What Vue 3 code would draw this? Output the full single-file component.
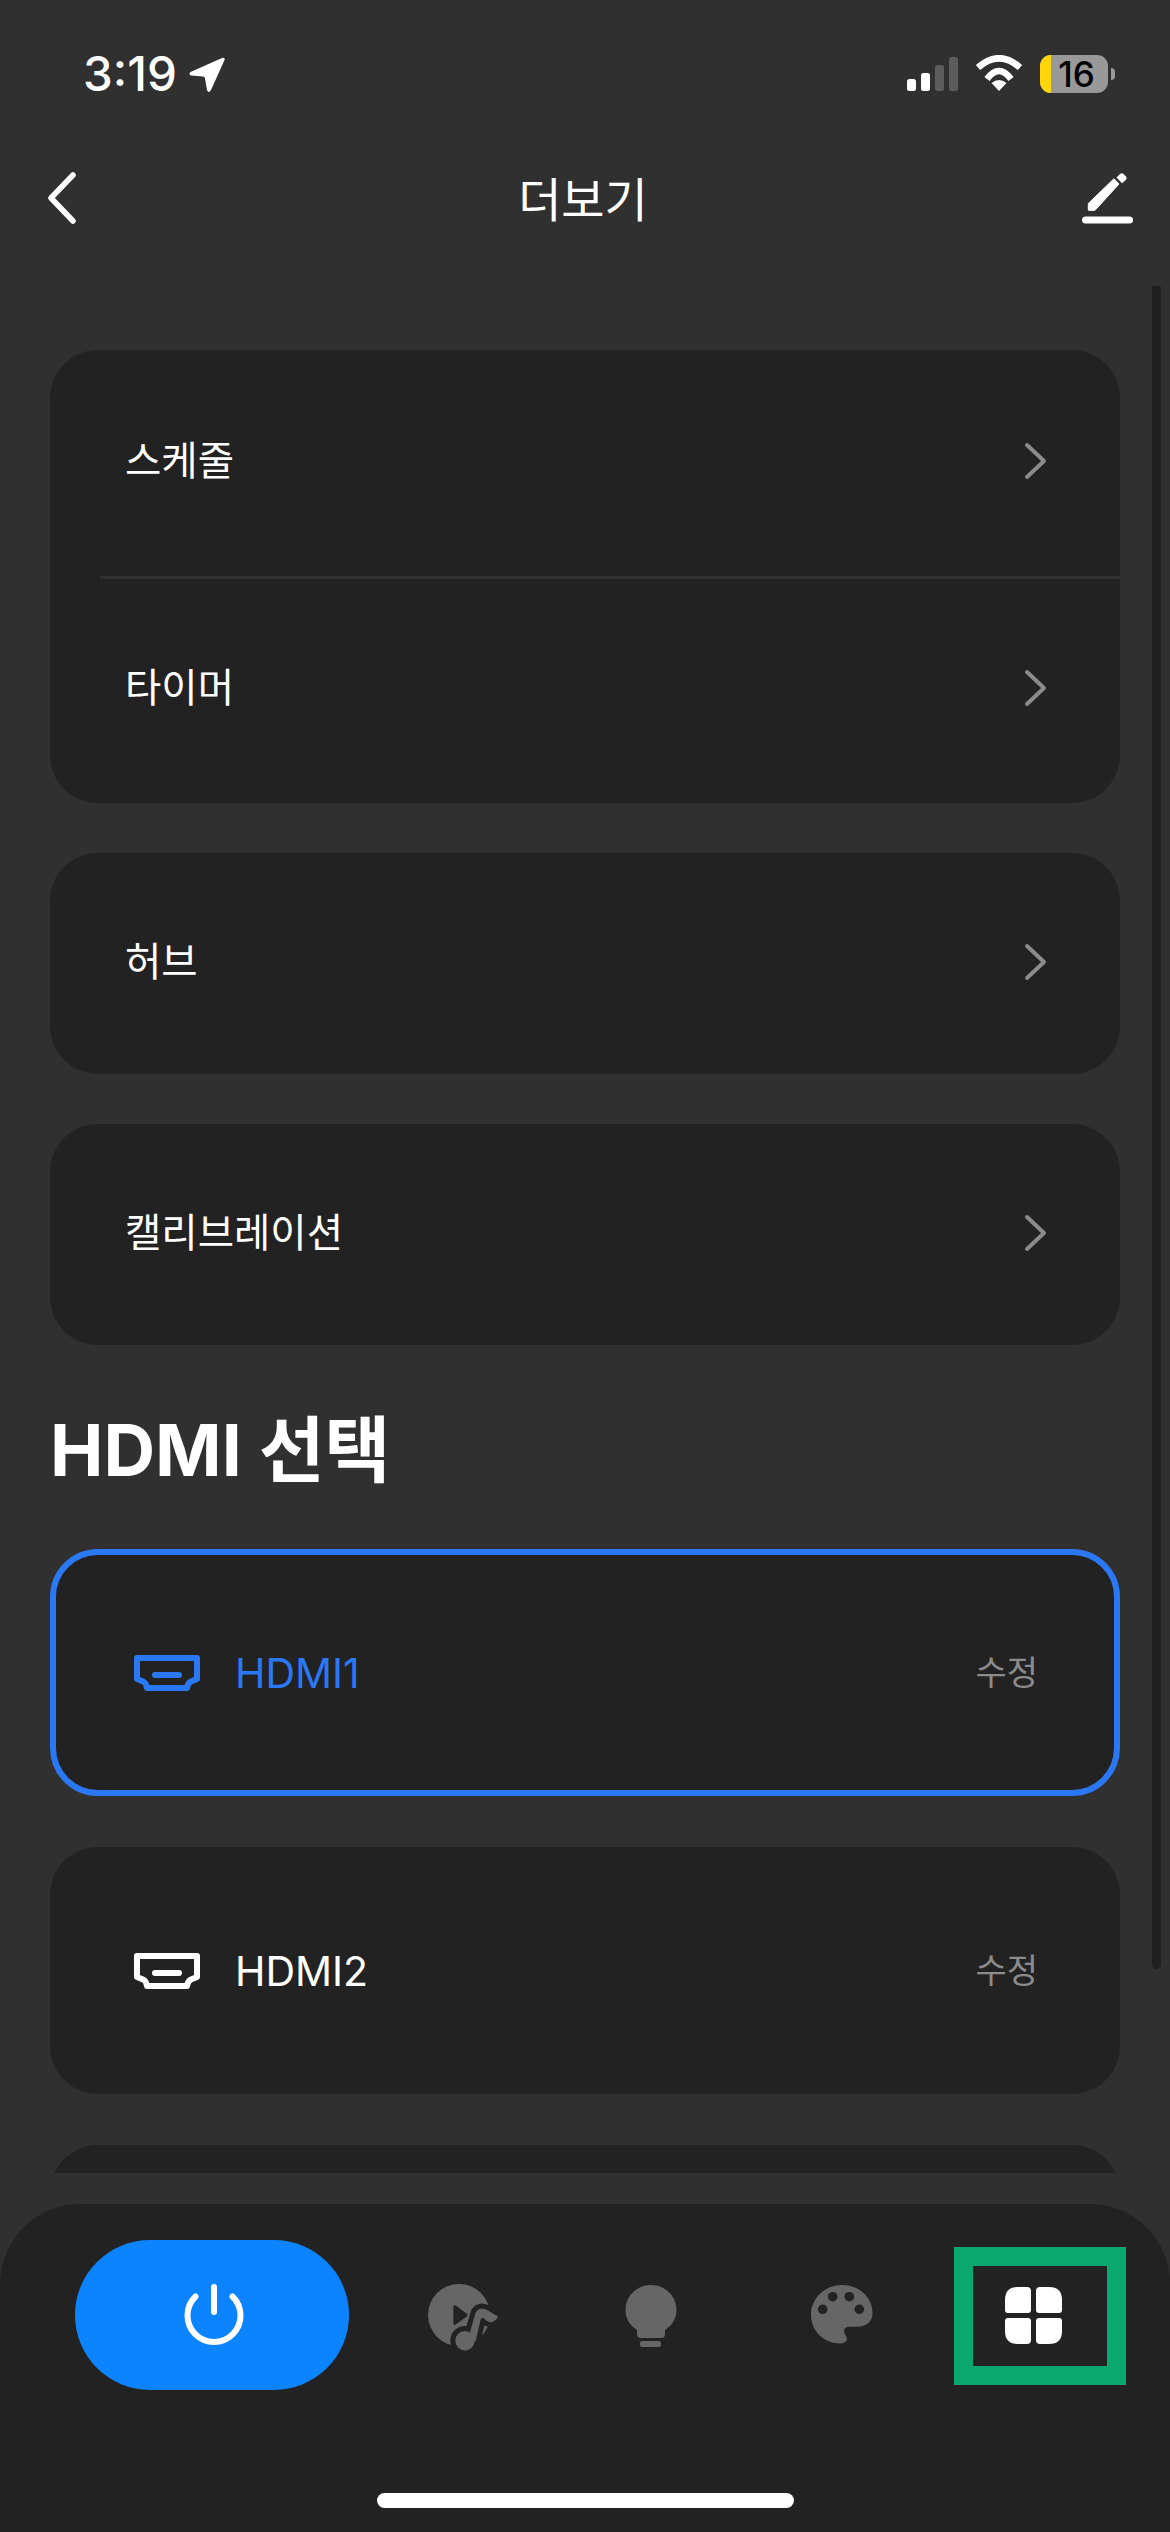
<script setup>
const groups = [['스케줄', '타이머'], ['허브'], ['캘리브레이션']]
const inputs = [
  { name: 'HDMI1', active: true },
  { name: 'HDMI2', active: false }
]
</script>

<template>
  <div class="screen">
    <div class="status">
      <span class="time">3:19</span>
      <svg class="loc" width="36" height="36" viewBox="0 0 36 36"><path d="M33 1Q36.500 0 35.300 3.500L22 33Q19.500 37 18 33L16 21.500Q16 19.500 14 19.500L2 18.500Q-1 17 1.500 15Z" fill="#fff"/></svg>
      <span class="spring"></span>
      <svg class="signal" width="51" height="34" viewBox="0 0 51 34">
        <rect x="0" y="22" width="9" height="12" rx="2.500" fill="#fff"/>
        <rect x="14" y="16" width="9" height="18" rx="2.500" fill="#fff"/>
        <rect x="28" y="8" width="9" height="26" rx="2.500" fill="#5c5c5c"/>
        <rect x="42" y="0" width="9" height="34" rx="2.500" fill="#5c5c5c"/>
      </svg>
      <svg class="wifi" width="48" height="36" viewBox="0 0 48 36">
        <path d="M3 12.500Q24 -6 45 12.500" fill="none" stroke="#fff" stroke-width="6.500"/>
        <path d="M12 24Q24 8 36 24" fill="none" stroke="#fff" stroke-width="6.500"/>
        <path d="M24 36 16.500 28Q24 22 31.500 28Z" fill="#fff"/>
      </svg>
      <div class="battery"><i class="charge"></i><span>16</span></div>
      <i class="cap"></i>
    </div>

    <header class="bar">
      <svg width="30" height="52" viewBox="0 0 30 52"><path d="M26 3 4 26l22 23" fill="none" stroke="#fff" stroke-width="5.500" stroke-linecap="round" stroke-linejoin="round"/></svg>
      <h1>더보기</h1>
      <svg width="52" height="52" viewBox="0 0 52 52">
        <path d="M6.300 38V31.500L32 6.700 37 12 13 38.300H7Q6.300 38.300 6.300 38Z" fill="#fff" stroke="#fff" stroke-width="1" stroke-linejoin="round"/>
        <path d="M34.500 5.500 38 2Q39.700 .5 41.500 2L44 4.500Q45.500 6 44 7.700L40 11.300Z" fill="#fff"/>
        <rect x="0" y="44.500" width="51" height="7" rx="3.500" fill="#fff"/>
      </svg>
    </header>

    <main class="scroll">
      <section v-for="(g, i) in groups" :key="i" class="card">
        <div v-for="item in g" :key="item" class="row" :class="{ tall: g.length > 1 }">
          <span class="label">{{ item }}</span>
          <svg width="24" height="38" viewBox="0 0 24 38"><path d="M3 3l17 16L3 35" fill="none" stroke="#8b8b8b" stroke-width="4" stroke-linecap="round" stroke-linejoin="round"/></svg>
        </div>
      </section>
      <h2>HDMI 선택</h2>
      <div v-for="inp in inputs" :key="inp.name" class="input" :class="{ on: inp.active }">
        <svg width="66" height="36" viewBox="0 0 66 36">
          <path d="M3 3h60v21l-6 2.500c-2.500 1-3.500 3-4 6.500H13c-.5-3.500-1.500-5.500-4-6.500L3 24Z" fill="none" stroke="currentColor" stroke-width="6" stroke-linejoin="round"/>
          <rect x="18" y="17" width="30" height="6" rx="3" fill="currentColor"/>
        </svg>
        <span class="iname">{{ inp.name }}</span>
        <span class="edit">수정</span>
      </div>
      <div class="input"></div>
      <i class="thumb"></i>
    </main>

    <nav class="tabs">
      <div class="tabrow">
        <button class="power">
          <svg width="60" height="62" viewBox="0 0 60 62">
            <path d="M11.500 12.500a26.500 26.500 0 1 0 37 0" fill="none" stroke="#fff" stroke-width="6" stroke-linecap="round"/>
            <path d="M30 3v25" stroke="#fff" stroke-width="6" stroke-linecap="round"/>
          </svg>
        </button>
        <svg class="t1" width="72" height="68" viewBox="0 0 72 68">
          <circle cx="31" cy="31" r="31" fill="#666"/>
          <path d="M25.300 23c0-1.500 1.300-2.200 2.500-1.400l11 8.200c1 .8 1 2 0 2.800l-11 8c-1.200.8-2.500.1-2.500-1.400Z" fill="#222"/>
          <g fill="#222" stroke="#222" stroke-width="10" stroke-linejoin="round">
            <circle cx="37" cy="56.700" r="9.700"/>
            <path d="M47.500 58 52.500 36Q53 33.500 55.500 34Q58 37 62 38.300Q67 38 70.300 32.700L60 26.500Q55 23.500 51.500 25Q47.500 27 47 31L42 48Z"/>
          </g>
          <g fill="#666">
            <circle cx="37" cy="56.700" r="9.700"/>
            <path d="M47.500 58 52.500 36Q53 33.500 55.500 34Q58 37 62 38.300Q67 38 70.300 32.700L60 26.500Q55 23.500 51.500 25Q47.500 27 47 31L42 48Z"/>
          </g>
        </svg>
        <svg class="t2" width="52" height="62" viewBox="0 0 52 62">
          <path d="M26 0C11.600 0 .5 11 .5 25c0 8.500 4 15 11.500 20v4c0 3 1.500 4 4 4h20c2.500 0 4-1 4-4v-4c7.500-5 11.500-11.500 11.500-20C51.500 11 40.400 0 26 0Z" fill="#666"/>
          <rect x="15" y="56" width="21" height="6" rx="2" fill="#666"/>
        </svg>
        <svg class="t3" width="62" height="60" viewBox="0 0 62 60">
          <path d="M31 0C14 0 0 13 0 30C0 46 13 58.500 29 58.500C35 58.500 37.500 54.500 35 51C32 47 32 41.700 39 41.700H46C55 41.700 61.500 37 61.500 28C61.500 12 48 0 31 0Z" fill="#666"/>
          <circle cx="21.700" cy="11.700" r="4.800" fill="#222"/>
          <circle cx="38.300" cy="11.700" r="4.800" fill="#222"/>
          <circle cx="11.700" cy="24.300" r="4.800" fill="#222"/>
          <circle cx="48.300" cy="24.300" r="4.800" fill="#222"/>
        </svg>
        <div class="tmore">
          <svg width="57" height="57" viewBox="0 0 57 57">
            <path d="M13 0h9q4 0 4 4v19q0 3-3 3H3q-3 0-3-3V13Q0 0 13 0Z" fill="#fff"/>
            <path d="M44 0h-9q-4 0-4 4v19q0 3 3 3h20q3 0 3-3V13Q57 0 44 0Z" fill="#fff"/>
            <path d="M13 57h9q4 0 4-4V34q0-3-3-3H3q-3 0-3 3v10Q0 57 13 57Z" fill="#fff"/>
            <path d="M44 57h-9q-4 0-4-4V34q0-3 3-3h20q3 0 3 3v10Q57 57 44 57Z" fill="#fff"/>
          </svg>
        </div>
      </div>
      <i class="home"></i>
    </nav>
  </div>
</template>

<style>
html, body { margin: 0; background: #303030; }
</style>

<style scoped>
.screen {
  width: 1170px;
  height: 2532px;
  background: #303030;
  color: #fff;
  display: flex;
  flex-direction: column;
  overflow: hidden;
  font-family: Inter, "Noto Sans CJK KR", sans-serif;
}
.status {
  height: 110px;
  box-sizing: border-box;
  padding: 55px 55px 0 83px;
  display: flex;
  align-items: flex-start;
}
.time { font-size: 47.500px; line-height: 38px; font-weight: 500; }
.loc { margin: 2px 0 0 12px; }
.spring { flex: 1; }
.signal { margin-top: 2px; }
.wifi { margin: 0 0 0 17px; }
.battery {
  position: relative;
  width: 68px;
  height: 38px;
  margin-left: 17px;
  border-radius: 11px;
  background: #999;
  display: flex;
  align-items: center;
  justify-content: center;
  color: #000;
  font-size: 35px;
  line-height: 38px;
  font-weight: 500;
}
.battery span { position: relative; margin-left: 5px; }
.charge { position: absolute; left: 0; top: 0; bottom: 0; width: 11px; border-radius: 11px 0 0 11px; background: #ffd60a; }
.cap { width: 4px; height: 12px; margin: 13px 0 0 3px; border-radius: 0 6px 6px 0; background: #999; }
.bar {
  height: 176px;
  box-sizing: border-box;
  padding: 0 36px 0 47px;
  display: flex;
  align-items: center;
  justify-content: space-between;
}
.bar h1 { margin: 4px 0 0 7px; font-size: 47px; font-weight: 400; line-height: 60px; }
.scroll {
  position: relative;
  height: 1887px;
  overflow: hidden;
  box-sizing: border-box;
  padding: 64px 50px 0;
}
.card {
  background: #222;
  border-radius: 48px;
  margin-bottom: 50px;
}
.row {
  height: 221px;
  box-sizing: border-box;
  padding: 0 72px 4px 75px;
  display: flex;
  align-items: center;
  justify-content: space-between;
  font-size: 39.500px;
}
.label { margin-bottom: 7px; }
.row.tall { height: 226px; }
.row.tall + .row.tall { position: relative; height: 227px; }
.row.tall + .row.tall::before {
  content: "";
  position: absolute;
  left: 50px;
  right: 0;
  top: 0;
  height: 3px;
  background: #303030;
}
h2 {
  margin: -12px 0 0;
  height: 166px;
  box-sizing: border-box;
  padding-top: 27px;
  font-size: 71.500px;
  line-height: 80px;
  font-weight: 700;
}
.input {
  height: 247px;
  box-sizing: border-box;
  margin-bottom: 51px;
  padding: 0 82px 0 84px;
  border-radius: 48px;
  background: #222;
  display: flex;
  align-items: center;
  font-size: 41px;
}
.input.on {
  border: 6px solid #2b78f5;
  padding: 0 76px 0 78px;
  color: #2b78f5;
}
.iname { margin-left: 35px; flex: 1; line-height: 48px; }
.edit { color: #8b8b8b; font-size: 34px; margin-bottom: 4px; }
.thumb {
  position: absolute;
  right: 9px;
  top: -2px;
  width: 9px;
  height: 1685px;
  border-radius: 5px;
  background: #1f1f1f;
}
.tabs {
  margin-top: 31px;
  height: 328px;
  box-sizing: border-box;
  padding-top: 36px;
  border-radius: 80px 80px 0 0;
  background: #222;
  display: flex;
  flex-direction: column;
  align-items: center;
}
.tabrow {
  width: 100%;
  box-sizing: border-box;
  padding-left: 75px;
  display: flex;
  align-items: center;
  height: 150px;
}
.power {
  width: 274px;
  height: 150px;
  border: 0;
  padding: 0 0 0 3px;
  border-radius: 75px;
  background: #0c84ff;
  display: flex;
  align-items: center;
  justify-content: center;
}
.t1 { margin: 6px 0 0 79px; }
.t2 { margin: 0 0 -1px 125px; }
.t3 { margin: 0 0 0 134px; }
.tmore {
  margin: 2px 0 0 81px;
  width: 172px;
  height: 138px;
  border: 19px solid #0aa86e;
  box-sizing: border-box;
  padding: 21px 0 0 32px;
}
.tmore svg { display: block; }
.home {
  margin-top: 103px;
  width: 417px;
  height: 15px;
  border-radius: 8px;
  background: #fff;
}
</style>
